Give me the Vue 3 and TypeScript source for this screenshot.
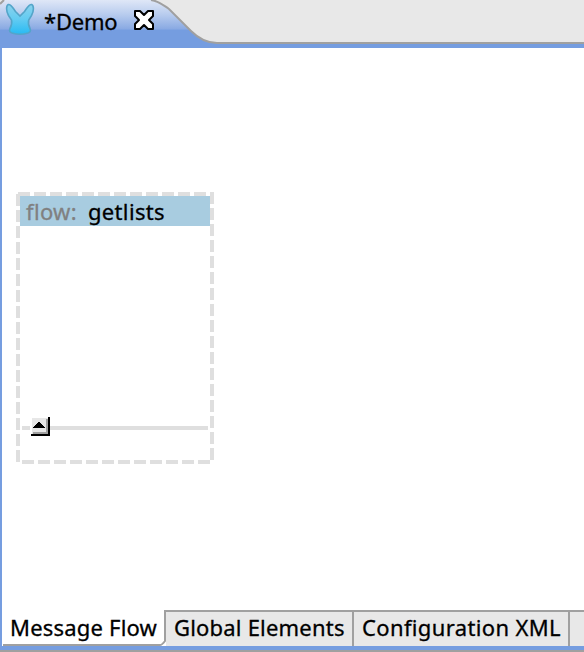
<script setup lang="ts">
import { ref } from 'vue'

const file = ref('*Demo')
const flowName = ref('getlists')
const pages = [
  { label: 'Message Flow', cls: 'message' },
  { label: 'Global Elements', cls: 'global' },
  { label: 'Configuration XML', cls: 'config' },
]
const active = ref(0)
</script>

<template>
  <main class="editor">
    <header class="header">
      <svg class="tab-shape" width="584" height="48" viewBox="0 0 584 48">
        <defs>
          <linearGradient id="tabFill" x1="0" y1="0" x2="0" y2="48" gradientUnits="userSpaceOnUse">
            <stop offset="0" stop-color="#dfe7f7" />
            <stop offset="0.3" stop-color="#b8ccee" />
            <stop offset="0.6" stop-color="#8aaae3" />
            <stop offset="0.63" stop-color="#759de0" />
            <stop offset="1" stop-color="#759de0" />
          </linearGradient>
        </defs>
        <rect width="584" height="48" fill="#e8e8e8" />
        <path d="M0 5L5 0H151C159 1 163 5 169 9L191 31C198 38 206 43 217 43H584V48H0Z" fill="url(#tabFill)" />
        <path d="M151 0C159 1 163 5 169 9L191 31C198 38 206 43 217 43H584M0 4L4 0" fill="none" stroke="#a0a0a0" stroke-width="2" />
      </svg>
      <div class="tab">
        <svg class="mule" width="30" height="32" viewBox="5 2 30 32">
          <defs>
            <linearGradient id="mule" x1="0" y1="0" x2="0" y2="1">
              <stop offset="0" stop-color="#8ad2ec" />
              <stop offset="0.5" stop-color="#62cbf2" />
              <stop offset="1" stop-color="#28baf3" />
            </linearGradient>
          </defs>
          <path d="M8.3 4.5C6 5.5 6 11 8.5 15.5L11.5 20C12.2 23 11.5 26 9.8 29C9 31 10 32.3 12 33C17 34.5 23 34.5 28 33C30 32.3 31 31 30.2 29C28.5 26 28 23 28.7 20L31.5 15.5C34 11 34 5.5 31.7 4.5C29 4 27 8 24.5 11.5L20 16L15.5 11.5C13 8 11 4 8.3 4.5Z" fill="url(#mule)" stroke="#54a5c9" stroke-width="1.6" />
        </svg>
        <span class="file">{{ file }}</span>
        <svg class="close" width="20" height="20" viewBox="0 0 20 20">
          <path d="M1 1H6L10 5L14 1H19V6L15 10L19 14V19H14L10 15L6 19H1V14L5 10L1 6Z" fill="#fff" stroke="#000" stroke-width="2" stroke-linejoin="round" />
        </svg>
      </div>
    </header>

    <section class="canvas">
      <article class="flow">
        <svg class="outline" width="198" height="272" viewBox="0 0 198 272">
          <g fill="none" stroke="#dfdfdf" stroke-width="4" stroke-dasharray="12 4">
            <path d="M2 2V272" />
            <path d="M2 2H198" />
            <path d="M196 0V268" />
            <path d="M6 270H194" />
          </g>
        </svg>
        <div class="title"><span class="kind">flow:</span><span class="name">{{ flowName }}</span></div>
        <div class="body"></div>
        <div class="divider">
          <i class="stub"></i>
          <svg class="toggle" width="20" height="20" viewBox="0 0 20 20" shape-rendering="crispEdges">
            <path d="M2 2H18V18H2Z" fill="#e7e7e7" />
            <path d="M3 16H16V3H18V18H3Z" fill="#a0a0a0" />
            <path d="M1 18H18V1H20V20H1Z" fill="#000" />
            <path d="M3 12V11H4V10H5V9H6V8H7V7H8V6H10V7H11V8H12V9H13V10H14V11H15V12Z" fill="#000" />
          </svg>
          <i class="rule"></i>
        </div>
      </article>
    </section>

    <footer class="pages">
      <button
        v-for="(page, i) in pages"
        :key="page.label"
        :class="['page', page.cls, { active: i === active }]"
        @click="active = i"
      >
        <svg v-if="i === active" class="edge" width="164" height="36" viewBox="0 0 164 36">
          <path d="M1 35H158Q160 35 163 31V0" fill="none" stroke="#a0a0a0" stroke-width="2" />
        </svg>
        <span>{{ page.label }}</span>
      </button>
      <div class="rest"></div>
    </footer>
  </main>
</template>

<style>
body {
  margin: 0;
  overflow: hidden;
}
</style>

<style scoped>
.editor {
  width: 584px;
  height: 652px;
  box-sizing: border-box;
  display: flex;
  flex-direction: column;
  background: #fff;
  font-family: "Noto Sans", "Open Sans", sans-serif;
  font-size: 22px;
  line-height: 30px;
  color: #000;
  -webkit-text-stroke-width: 0.3px;
  border-bottom: 2px solid #a0a0a0;
}
.header {
  display: grid;
  height: 48px;
  flex: none;
}
.tab-shape,
.tab {
  grid-area: 1 / 1;
}
.tab {
  display: flex;
  align-items: flex-start;
  height: 44px;
}
.mule {
  margin: 2px 0 0 5px;
  overflow: visible;
}
.file {
  width: 74px;
  margin: 6px 0 0 9px;
  letter-spacing: -0.2px;
  white-space: nowrap;
}
.close {
  margin: 10px 0 0 16px;
}
.canvas {
  flex: 1;
  border-left: 2px solid #759de0;
}
.flow {
  display: grid;
  width: 198px;
  height: 272px;
  margin: 144px 0 0 14px;
  grid-template-rows: 4px 30px 190px 20px 28px;
}
.outline {
  grid-area: 1 / 1 / 6 / 2;
}
.title {
  grid-area: 2 / 1;
  width: 190px;
  height: 30px;
  margin-left: 4px;
  box-sizing: border-box;
  padding-left: 6px;
  display: flex;
  background: #a8cce0;
  line-height: 31px;
  letter-spacing: 0.33px;
  white-space: nowrap;
}
.kind {
  width: 62px;
  color: #808080;
}
.body {
  grid-area: 3 / 1;
}
.divider {
  grid-area: 4 / 1;
  display: flex;
  align-items: center;
  padding: 0 6px;
}
.stub,
.rule {
  height: 4px;
  margin-top: 4px;
  background: #dfdfdf;
}
.stub {
  width: 8px;
}
.rule {
  flex: 1;
}
.pages {
  display: flex;
  height: 36px;
  flex: none;
  border-left: 2px solid #759de0;
  border-bottom: 4px solid #759de0;
}
.page {
  display: grid;
  align-items: start;
  box-sizing: border-box;
  height: 36px;
  margin: 0;
  padding: 0;
  border: 0;
  border-top: 2px solid #a0a0a0;
  border-right: 2px solid #a0a0a0;
  background: #e8e8e8;
  font: inherit;
  text-align: left;
  color: inherit;
  white-space: nowrap;
}
.page span {
  grid-area: 1 / 1;
  line-height: 31px;
}
.page.active {
  width: 164px;
  border: 0;
  background: #fff;
}
.page.active span {
  margin: 2px 0 0 8px;
}
.message {
  letter-spacing: 0.2px;
}
.edge {
  grid-area: 1 / 1;
}
.global {
  width: 188px;
  padding-left: 8px;
  letter-spacing: 0.2px;
}
.config {
  width: 216px;
  padding-left: 8px;
  letter-spacing: 0.36px;
}
.rest {
  flex: 1;
  border-top: 2px solid #a0a0a0;
  background: #e8e8e8;
}
</style>
